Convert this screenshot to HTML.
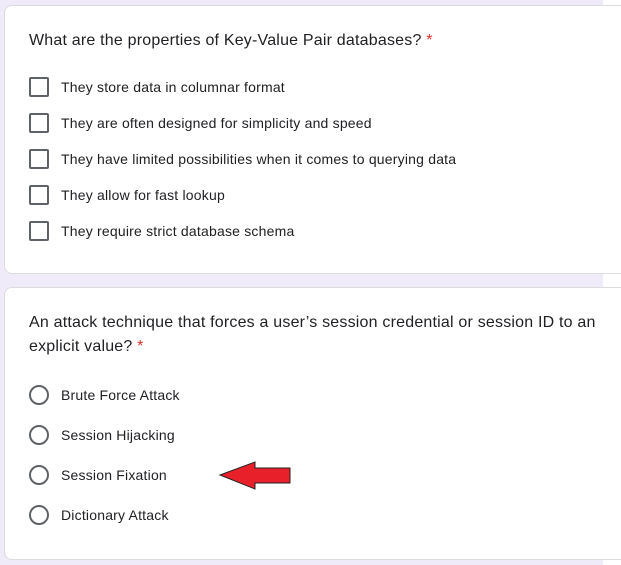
<!DOCTYPE html>
<html><head><style>
body{margin:0;width:621px;height:565px;background:#fff;font-family:"Liberation Sans",Arial,sans-serif;position:relative;overflow:hidden}
.bg{position:absolute;left:0;top:0;width:603px;height:565px;background:#f0ebf8}
.card{position:absolute;left:4px;width:640px;background:#fff;border:1px solid #dadce0;border-radius:8px}
.q{position:absolute;left:29px;font-size:16px;color:#202124;line-height:24px;letter-spacing:0.2px}
.q span{color:#d93025}
.opt{position:absolute;left:61px;font-size:14px;color:#202124;line-height:20px;transform:translateY(-10px);letter-spacing:0.2px}
.cb{position:absolute;left:29px;width:16px;height:16px;border:2px solid #5f6368;border-radius:2px;transform:translateY(-10px)}
.rb{position:absolute;left:29px;width:16px;height:16px;border:2px solid #5f6368;border-radius:50%;transform:translateY(-10px)}
</style></head><body>
<div class="bg"></div>
<div class="card" style="top:5px;height:267px"></div>
<div class="card" style="top:287px;height:271px"></div>
<div class="q" style="top:29px">What are the properties of Key-Value Pair databases? <span>*</span></div>
<div class="cb" style="top:87px"></div><div class="opt" style="top:87px">They store data in columnar format</div>
<div class="cb" style="top:123px"></div><div class="opt" style="top:123px">They are often designed for simplicity and speed</div>
<div class="cb" style="top:159px"></div><div class="opt" style="top:159px">They have limited possibilities when it comes to querying data</div>
<div class="cb" style="top:195px"></div><div class="opt" style="top:195px">They allow for fast lookup</div>
<div class="cb" style="top:231px"></div><div class="opt" style="top:231px">They require strict database schema</div>
<div class="q" style="top:311px;width:575px">An attack technique that forces a user’s session credential or session ID to an explicit value? <span>*</span></div>
<div class="rb" style="top:395px"></div><div class="opt" style="top:395px">Brute Force Attack</div>
<div class="rb" style="top:435px"></div><div class="opt" style="top:435px">Session Hijacking</div>
<div class="rb" style="top:475px"></div><div class="opt" style="top:475px">Session Fixation</div>
<div class="rb" style="top:515px"></div><div class="opt" style="top:515px">Dictionary Attack</div>
<svg style="position:absolute;left:0;top:0" width="621" height="565"><polygon points="220,475 255,462 255,468 290,468 290,483 255,483 255,489" fill="#e8202a" stroke="#222" stroke-width="1"/></svg>
</body></html>
